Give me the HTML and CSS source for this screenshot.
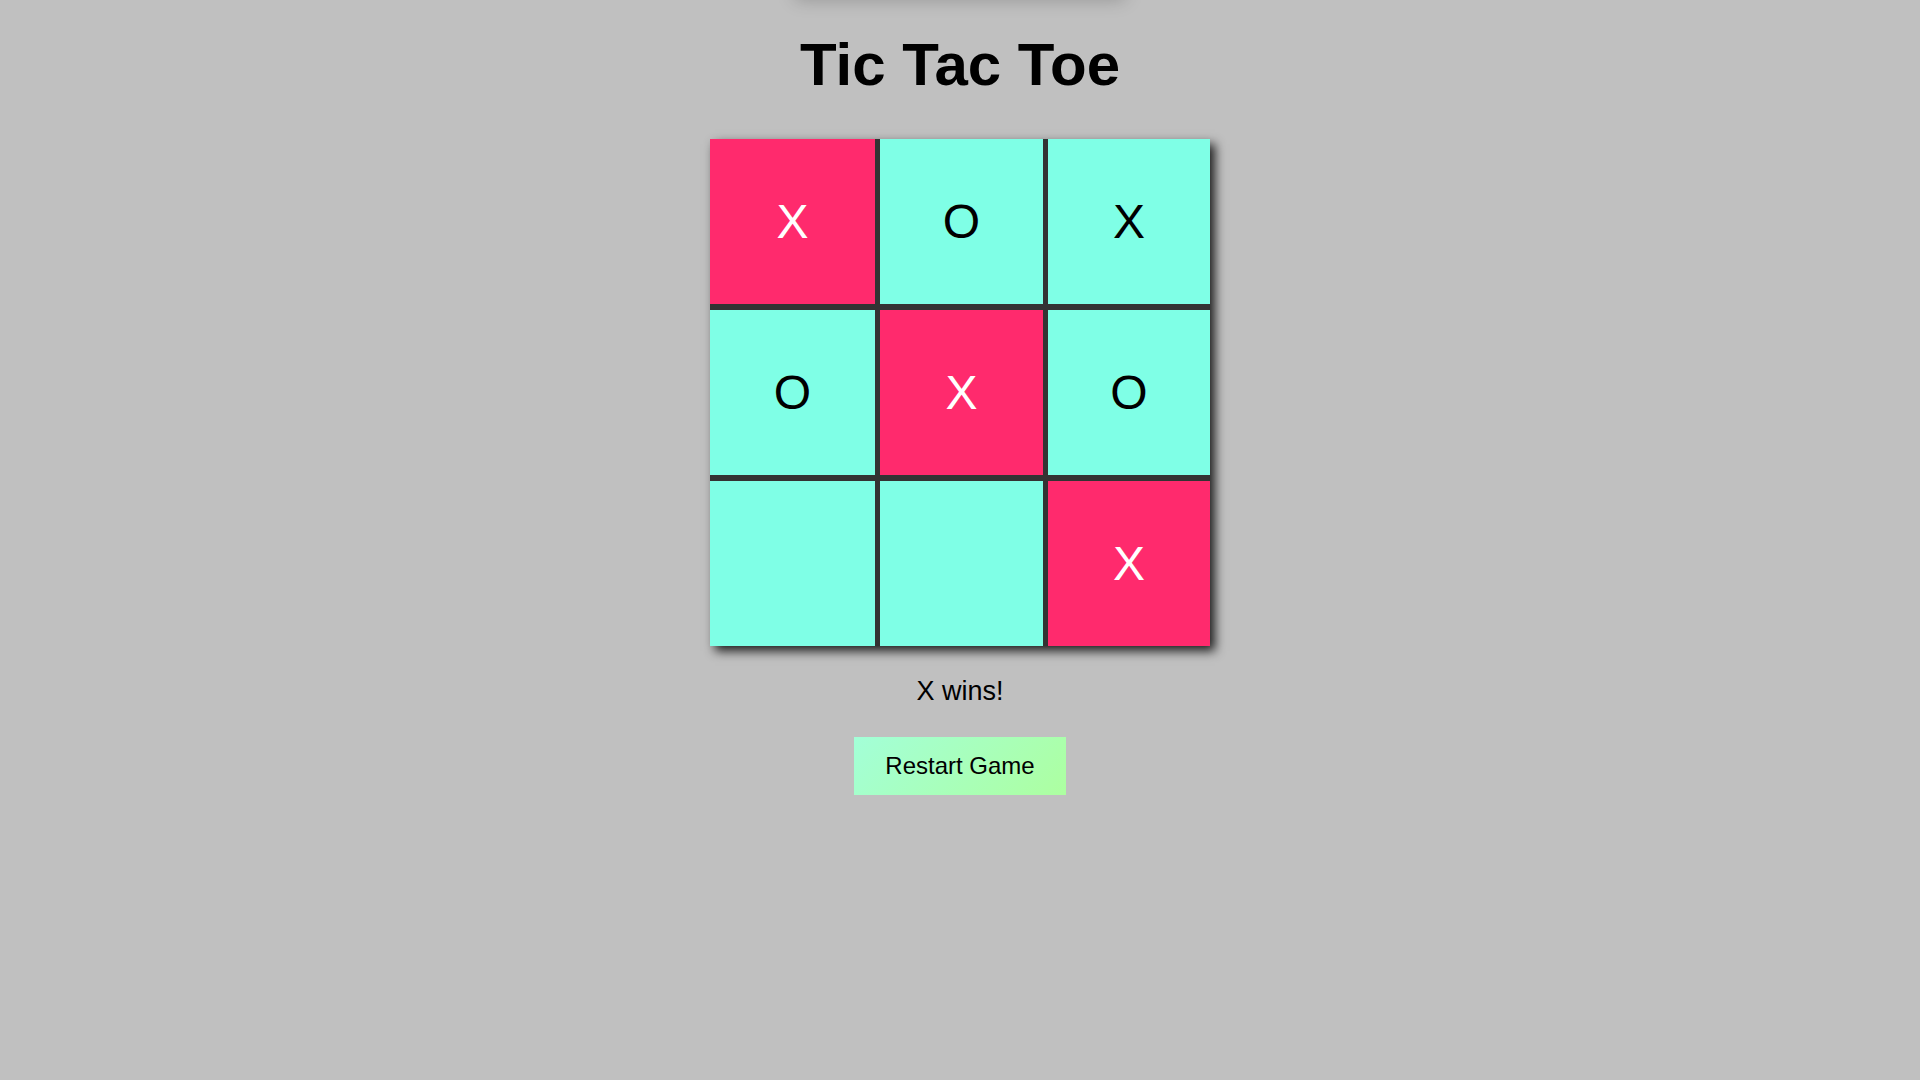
FILE: index.html
```html
<!DOCTYPE html>
<html lang="en">
<head>
<meta charset="utf-8">
<title>Tic Tac Toe</title>
<link rel="stylesheet" href="styles.css">
</head>
<body>
<div class="top-shade"></div>
<main class="game">
  <h1 class="title">Tic Tac Toe</h1>
  <div class="board">
    <div class="cell win">X</div>
    <div class="cell">O</div>
    <div class="cell">X</div>
    <div class="cell">O</div>
    <div class="cell win">X</div>
    <div class="cell">O</div>
    <div class="cell"></div>
    <div class="cell"></div>
    <div class="cell win">X</div>
  </div>
  <p class="status">X wins!</p>
  <button class="restart" type="button">Restart Game</button>
</main>
</body>
</html>
```
FILE: styles.css
```css
html, body {
  margin: 0;
  padding: 0;
}

body {
  background: #c0c0c0;
  font-family: "Liberation Sans", Arial, sans-serif;
  color: #000;
  min-height: 100vh;
  overflow: hidden;
}

.top-shade {
  position: absolute;
  top: -40px;
  left: 50%;
  width: 330px;
  height: 40px;
  margin-left: -165px;
  box-shadow: 0 0 18px rgba(0, 0, 0, 0.22);
}

.game {
  display: flex;
  flex-direction: column;
  align-items: center;
  padding-top: 30px;
}

.title {
  margin: 0 0 39px;
  font-size: 60px;
  line-height: 70px;
  font-weight: bold;
}

.board {
  width: 500px;
  display: grid;
  grid-template-columns: 165px 163px 1fr;
  grid-template-rows: repeat(3, 165px);
  column-gap: 5px;
  row-gap: 6px;
  background: #333333;
  box-shadow: 5px 5px 10px rgba(0, 0, 0, 0.85);
}

.cell {
  background: #7fffe6;
  display: flex;
  align-items: center;
  justify-content: center;
  font-size: 48px;
  color: #000;
}

.cell.win {
  background: #ff2a6d;
  color: #fff;
}

.status {
  margin: 29px 0 0;
  font-size: 27px;
  line-height: 32px;
}

.restart {
  margin-top: 30px;
  padding: 15px 31px;
  border: none;
  font-family: "Liberation Sans", Arial, sans-serif;
  font-size: 24px;
  line-height: normal;
  color: #000;
  background: linear-gradient(135deg, #a3ffd8, #adffa0);
  cursor: pointer;
}
```
